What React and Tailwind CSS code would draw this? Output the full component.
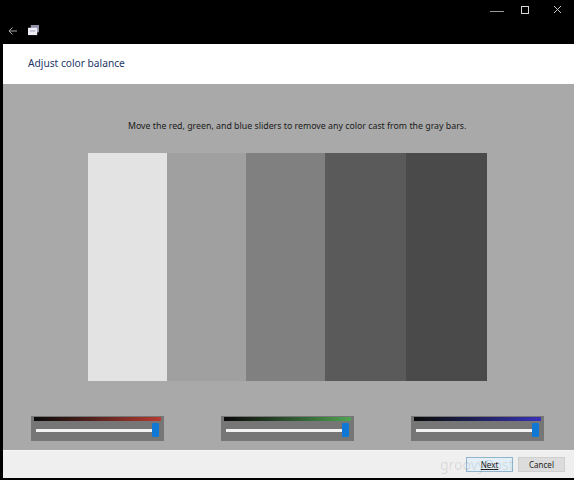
const font = { fontFamily: '"Noto Sans", sans-serif' };

function Slider({ gradient }) {
  return (
    <div className="w-[133px] h-[25px] bg-[#767676] pt-[1px] px-[2px]">
      <div className={"h-[4px] mx-[1px] " + gradient} />
      <div className="relative h-[20px] flex items-center pl-[3px] pr-[8px]">
        <div className="w-full h-[3px] bg-[#f2f2f2] mt-[-2px]" />
        <div className="absolute right-[3px] top-[2px] w-[7px] h-[14px] bg-[#0f78d4] rounded-[1px]" />
      </div>
    </div>
  );
}

export default function App() {
  return (
    <div style={font} className="w-[574px] h-[480px] bg-black flex flex-col overflow-hidden pl-[3px] pb-[2px]">
      <div className="h-[44px] shrink-0 flex flex-col">
        <div className="h-[25px] flex items-start justify-end">
          <div className="flex items-center pr-[12px] pt-[5px]">
            <div className="w-[14px] h-[1px] bg-[#9a9a9a] mt-[4px]" />
            <div className="w-[8px] h-[8px] border border-[#d8d8d8] ml-[17px]" />
            <svg className="ml-[24px]" width="9" height="9" viewBox="0 0 9 9" stroke="#c8c8c8" strokeWidth="1"><path d="M1 1l7 7M8 1L1 8" /></svg>
          </div>
        </div>
        <div className="flex items-center gap-[10px] pl-[5px]">
          <svg width="10" height="10" viewBox="0 0 10 10" fill="none" stroke="#a8a8a8" strokeWidth="1"><path d="M9 5H1M4.5 1.5L1 5l3.5 3.5" /></svg>
          <svg width="11" height="11" viewBox="0 0 12 12">
            <rect x="3" y="0" width="9" height="8" fill="#8f8fa8" />
            <rect x="0" y="3" width="10" height="8" fill="#eeeef6" />
            <rect x="2" y="6" width="6" height="1" fill="#9a9ab8" />
          </svg>
        </div>
      </div>
      <div className="h-[40px] shrink-0 bg-white flex items-center pl-[25px]">
        <h1 className="text-[10.2px] text-[#1e3768]">Adjust color balance</h1>
      </div>
      <div className="flex-1 bg-[#a9a9a9] flex flex-col">
        <p className="mt-[35px] h-[14px] leading-[14px] pl-[125px] text-[8.8px] text-[#1a1a1a] whitespace-nowrap">
          Move the red, green, and blue sliders to remove any color cast from the gray bars.
        </p>
        <div className="mt-[20px] ml-[85px] flex h-[228px] w-[399px]">
          <div className="w-[79px] bg-[#e3e3e3]" />
          <div className="w-[79px] bg-[#a0a0a0]" />
          <div className="w-[79px] bg-[#808080]" />
          <div className="w-[81px] bg-[#5a5a5a]" />
          <div className="w-[81px] bg-[#4a4a4a]" />
        </div>
        <div className="mt-[35px] ml-[28px] flex gap-[57px]">
          <Slider gradient="bg-gradient-to-r from-[#0a0a0a] to-[#b83a30]" />
          <Slider gradient="bg-gradient-to-r from-[#0a0a0a] to-[#4ea552]" />
          <Slider gradient="bg-gradient-to-r from-[#0a0a0a] to-[#3a30b8]" />
        </div>
      </div>
      <div className="relative h-[28px] shrink-0 bg-[#efefef] border-t border-[#f6f6f6] flex items-center justify-end gap-[5px] pr-[9px]">
        <button className="w-[47px] h-[15px] bg-[#e3eef6] border border-[#8fb4cc] text-[8px] leading-[13px] text-[#222] underline">Next</button>
        <button className="w-[47px] h-[15px] bg-[#dcdcdc] border border-[#cfcfcf] text-[8px] leading-[13px] text-[#222]">Cancel</button>
        <span className="absolute left-[437px] top-[3px] text-[14px] text-black/10 pointer-events-none">groovyPost</span>
      </div>
    </div>
  );
}
